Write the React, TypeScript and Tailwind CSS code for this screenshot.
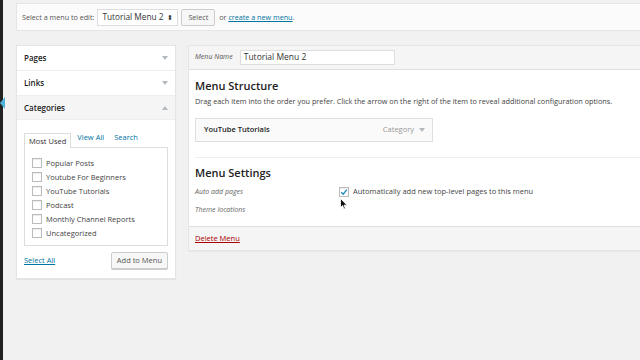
import React from 'react';

const cats = ['Popular Posts', 'Youtube For Beginners', 'YouTube Tutorials', 'Podcast', 'Monthly Channel Reports', 'Uncategorized'];

function Caret({ up = false }: { up?: boolean }) {
  return (
    <svg width="6" height="4" viewBox="0 0 6 4" className="shrink-0">
      {up ? <path d="M0 4 L3 0 L6 4 Z" fill="#b4b9be" /> : <path d="M0 0 L6 0 L3 4 Z" fill="#b4b9be" />}
    </svg>
  );
}

function Box({ checked = false }: { checked?: boolean }) {
  return (
    <span className="w-[10px] h-[10px] border border-[#bbb] bg-white shadow-[inset_0_1px_1px_rgba(0,0,0,0.08)] flex items-center justify-center shrink-0">
      {checked && (
        <svg width="8" height="8" viewBox="0 0 8 8">
          <path d="M1.2 4.2 L3.2 6.2 L6.8 1.6" stroke="#1e8cbe" strokeWidth="1.4" fill="none" />
        </svg>
      )}
    </span>
  );
}

export default function App() {
  return (
    <div className="w-[640px] h-[360px] bg-[#f1f1f1] flex overflow-hidden relative text-[#444] font-['Open_Sans',sans-serif]">
      {/* admin bar edge */}
      <div className="w-[3px] bg-[#222] shrink-0" />
      <div className="absolute left-0 top-[97px] w-0 h-0 border-y-[6px] border-y-transparent border-r-[5px] border-r-[#4fb2d8]" />

      <div className="flex-1 pl-[13px] pt-[3px]">
        {/* menu selector */}
        <div className="h-[28px] bg-[#fbfbfb] border border-r-0 border-[#e5e5e5] flex items-center pl-[5px] text-[7.2px] text-[#555]">
          <span>Select a menu to edit:</span>
          <div className="ml-[3px] w-[81px] h-[17px] bg-white border border-[#ddd] flex items-center justify-between px-[4px] text-[8.3px] text-[#333]">
            <span>Tutorial Menu 2</span>
            <span className="text-[7px] leading-none">⬍</span>
          </div>
          <div className="ml-[3px] h-[17px] px-[6px] bg-[#f7f7f7] border border-[#ccc] rounded-[2px] flex items-center text-[7.2px] text-[#555]">Select</div>
          <span className="ml-[4px]">or <span className="text-[#0074a2] underline">create a new menu</span>.</span>
        </div>

        <div className="flex gap-[12px] mt-[14px]">
          {/* left column */}
          <div className="w-[160px] bg-white shadow-[0_1px_1px_rgba(0,0,0,0.06)] border border-[#e5e5e5] self-start">
            <div className="h-[25px] border-b border-[#eee] flex items-center justify-between px-[7px] text-[8px] font-semibold text-[#222]">
              <span>Pages</span><Caret />
            </div>
            <div className="h-[25px] border-b border-[#eee] flex items-center justify-between px-[7px] text-[8px] font-semibold text-[#222]">
              <span>Links</span><Caret />
            </div>
            <div className="h-[24px] bg-[#f5f5f5] border-b border-[#eee] flex items-center justify-between px-[7px] text-[8px] font-semibold text-[#222]">
              <span>Categories</span><Caret up />
            </div>
            <div className="px-[7px] pt-[12px] pb-[9px]">
              <div className="flex text-[7.5px] items-end">
                <div className="h-[15px] px-[4px] border border-b-0 border-[#ddd] flex items-center text-[#333] bg-white relative top-[1px]">Most Used</div>
                <span className="ml-[6px] mb-[4px] text-[#0074a2]">View All</span>
                <span className="ml-[10px] mb-[4px] text-[#0074a2]">Search</span>
              </div>
              <div className="border border-[#ddd] h-[99px] pl-[7px] pt-[10px] flex flex-col gap-[4px]">
                {cats.map((c) => (
                  <div key={c} className="flex items-center gap-[4px] h-[10px] text-[7.5px] text-[#444]">
                    <Box /><span>{c}</span>
                  </div>
                ))}
              </div>
              <div className="flex items-center justify-between mt-[6px]">
                <span className="text-[7.5px] text-[#0074a2] underline">Select All</span>
                <div className="h-[17px] px-[5px] bg-[#f7f7f7] border border-[#ccc] rounded-[2px] flex items-center text-[7.5px] text-[#555] shadow-[0_1px_0_#ccc]">Add to Menu</div>
              </div>
            </div>
          </div>

          {/* right column */}
          <div className="flex-1 border border-r-0 border-[#e5e5e5] shadow-[0_1px_1px_rgba(0,0,0,0.04)] self-start">
            <div className="h-[24px] bg-[#f5f5f5] border-b border-[#dfdfdf] flex items-center pl-[6px] text-[7px]">
              <span className="italic text-[#555]">Menu Name</span>
              <div className="ml-[7px] w-[155px] h-[15px] bg-white border border-[#ddd] flex items-center px-[3px] text-[8.5px] text-[#333]">Tutorial Menu 2</div>
            </div>
            <div className="bg-white pl-[6px] pt-[9px] h-[156px]">
              <div className="text-[11px] font-semibold text-[#222] leading-[14px]">Menu Structure</div>
              <div className="text-[7.3px] text-[#444] mt-[3px] whitespace-nowrap">Drag each item into the order you prefer. Click the arrow on the right of the item to reveal additional configuration options.</div>
              <div className="mt-[11px] w-[238px] h-[24px] bg-[#fafafa] border border-[#dfdfdf] flex items-center justify-between pl-[8px] pr-[7px]">
                <span className="text-[7.5px] font-semibold text-[#222]">YouTube Tutorials</span>
                <span className="flex items-center gap-[5px] text-[7.5px] text-[#999]">Category <Caret /></span>
              </div>
              <div className="mt-[15px] border-t border-[#eee]" />
              <div className="mt-[8px] text-[11px] font-semibold text-[#222] leading-[14px]">Menu Settings</div>
              <div className="flex items-center mt-[6px] h-[12px] text-[7px]">
                <span className="w-[144px] italic text-[#666]">Auto add pages</span>
                <Box checked />
                <span className="ml-[4px] text-[7.5px] text-[#444]">Automatically add new top-level pages to this menu</span>
              </div>
              <div className="mt-[7px] text-[7px] italic text-[#666] leading-[10px]">Theme locations</div>
            </div>
            <div className="h-[24px] bg-[#f5f5f5] border-t border-[#dfdfdf] flex items-center pl-[6px]">
              <span className="text-[7.5px] text-[#a00] underline">Delete Menu</span>
            </div>
          </div>
        </div>
      </div>

      {/* mouse pointer */}
      <svg className="absolute left-[340px] top-[198px]" width="8" height="12" viewBox="0 0 8 12">
        <path d="M0.5 0.5 L0.5 9.5 L2.6 7.6 L4 11 L5.4 10.4 L4 7.2 L7 7.2 Z" fill="#111" stroke="#fff" strokeWidth="0.8" />
      </svg>
    </div>
  );
}
